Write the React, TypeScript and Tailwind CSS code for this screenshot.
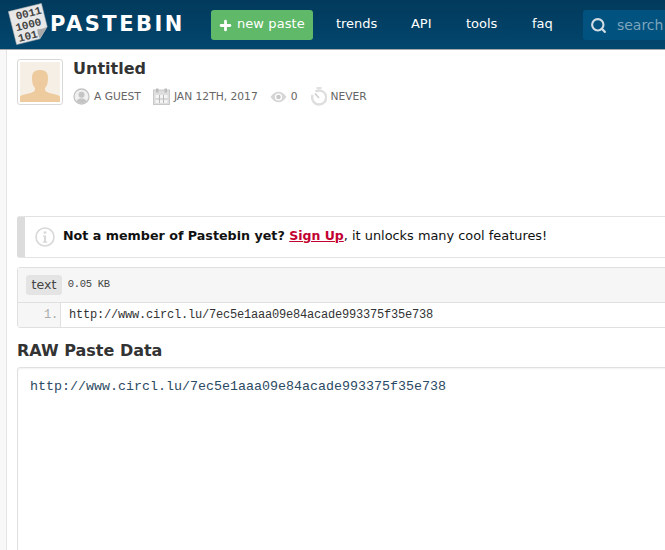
import { Plus, Search } from "lucide-react";

const sans = "font-['DejaVu_Sans',sans-serif]";
const mono = "font-['Liberation_Mono',monospace]";

function Logo() {
  return (
    <svg width="42" height="42" viewBox="0 0 42 42" className="shrink-0">
      <g transform="rotate(-14 21 21)">
        <path d="M4 4h34v24l-10 10H4z" fill="#e8e8e8" stroke="#bbb" strokeWidth="0.5" strokeLinejoin="round" />
        <path d="M38 28L28 38c-1-4-1-7 0-10 3 1 7 1 10 0z" fill="#a9a9a9" />
        <text x="10" y="14" fontFamily="Liberation Mono" fontWeight="700" fontSize="11" fill="#444">0011</text>
        <text x="7" y="25" fontFamily="Liberation Mono" fontWeight="700" fontSize="11" fill="#444">1000</text>
        <text x="7" y="36" fontFamily="Liberation Mono" fontWeight="700" fontSize="11" fill="#444">101</text>
      </g>
    </svg>
  );
}

function Avatar() {
  return (
    <div className="h-[46px] w-[46px] shrink-0 rounded-[3px] border border-[#d8d8d8] bg-white p-[2px]">
      <svg width="40" height="40" viewBox="0 0 40 40" className="block">
        <rect width="40" height="40" fill="#f5efe6" />
        <path d="M0 40v-5c1-3 9-3 13-5 2-1 2-2 2-4-2-2-3-5-3-10 0-6 3-8 8-8s8 2 8 8c0 5-1 8-3 10 0 2 0 3 2 4 4 2 12 2 13 5v5z" fill="#eecb9f" />
      </svg>
    </div>
  );
}

function GuestIcon() {
  return (
    <svg width="17" height="17" viewBox="0 0 17 17">
      <circle cx="8.5" cy="8.5" r="7.5" fill="#f0f0f0" stroke="#c4c4c4" strokeWidth="1.3" />
      <circle cx="8.5" cy="6.8" r="3" fill="#c4c4c4" />
      <path d="M3.5 13.5c1-2.5 3-3 5-3s4 .5 5 3c-3 2-7 2-10 0z" fill="#c4c4c4" />
    </svg>
  );
}

function CalendarIcon() {
  return (
    <svg width="17" height="17" viewBox="0 0 17 17">
      <rect x="0.5" y="2" width="16" height="14.5" fill="#ddd" stroke="#c9c9c9" />
      <rect x="3" y="0.5" width="2.5" height="4" fill="#bbb" />
      <rect x="11.5" y="0.5" width="2.5" height="4" fill="#bbb" />
      <rect x="2.5" y="7" width="12" height="8" fill="#f4f4f4" />
      <path d="M6.5 7v8M10.5 7v8M2.5 11h12" stroke="#bbb" />
    </svg>
  );
}

function EyeIcon() {
  return (
    <svg width="17" height="12" viewBox="0 0 17 12">
      <path d="M.5 6C3 2.3 5.6.8 8.5.8S14 2.3 16.5 6C14 9.7 11.4 11.2 8.5 11.2S3 9.7.5 6z" fill="#d6d6d6" />
      <circle cx="8.5" cy="6" r="3.6" fill="#fff" />
      <circle cx="8.5" cy="6" r="2.3" fill="#c8c8c8" />
    </svg>
  );
}

function TimerIcon() {
  return (
    <svg width="16" height="19" viewBox="0 0 16 19">
      <rect x="5.5" y="0" width="5" height="2" fill="#e0e0e0" />
      <path d="M4.5 4.5A7 7 0 1 1 1.6 8" fill="none" stroke="#dedede" strokeWidth="2.4" />
      <path d="M8 11L4 6.5" stroke="#cfcfcf" strokeWidth="1.6" />
    </svg>
  );
}

function InfoIcon() {
  return (
    <svg width="20" height="20" viewBox="0 0 20 20">
      <circle cx="10" cy="10" r="9" fill="#fff" stroke="#d8d8d8" strokeWidth="1.6" />
      <circle cx="10" cy="5.6" r="1.4" fill="#d8d8d8" />
      <path d="M8 8.5h3v6h1.2v1.3H7.8v-1.3H9V9.8H8z" fill="#d8d8d8" />
    </svg>
  );
}

export default function App() {
  return (
    <div className={`h-[550px] w-[665px] overflow-hidden bg-white ${sans}`}>
      <header className="flex h-[50px] items-start border-b border-[#a8a8a8] bg-gradient-to-b from-[#023a5c] to-[#02466e]">
        <div className="ml-[8px] mt-[3px] shrink-0">
          <Logo />
        </div>
        <span className="mt-[10px] shrink-0 text-[21px] leading-[28px] font-bold tracking-[2.5px] text-white">PASTEBIN</span>
        <button className="ml-[26px] mt-[10px] flex h-[30px] w-[102px] shrink-0 items-center rounded-[3px] bg-[#5fb968] pl-[7px] text-[13px] whitespace-nowrap text-white">
          <Plus size={15} strokeWidth={4.5} className="shrink-0" />
          <span className="ml-[4px] -translate-y-[1px] tracking-[0.1px]">new paste</span>
        </button>
        <nav className="mt-[15px] ml-[23px] flex shrink-0 text-[13px] leading-[18px] text-white">
          <span className="w-[75px]">trends</span>
          <span className="w-[55px]">API</span>
          <span className="w-[66px]">tools</span>
          <span className="w-[51px]">faq</span>
        </nav>
        <div className="mt-[10px] flex h-[30px] w-[100px] shrink-0 items-center rounded-l-[3px] bg-[#01527f] pl-[7px]">
          <Search size={17} strokeWidth={3} className="shrink-0 text-[#d3dde3]" />
          <span className="ml-[10px] text-[14px] text-[#7da5bd]">search</span>
        </div>
      </header>

      <div className="flex h-[500px]">
        <div className="w-[7px] shrink-0 border-r border-[#e4e4e4] bg-[#f8f8f8]" />
        <main className="min-w-0 flex-1 pl-[10px]">
          <div className="flex pt-[9px]">
            <Avatar />
            <div className="ml-[10px]">
              <h1 className="text-[16px] leading-[20px] font-bold text-[#333]">Untitled</h1>
              <div className="mt-[8px] flex items-center text-[10.7px] leading-[18px] text-[#666]">
                <GuestIcon />
                <span className="ml-[4px]">A GUEST</span>
                <span className="ml-[12px] flex"><CalendarIcon /></span>
                <span className="ml-[4px]">JAN 12TH, 2017</span>
                <span className="ml-[12px] flex"><EyeIcon /></span>
                <span className="ml-[4px]">0</span>
                <span className="ml-[13px] flex"><TimerIcon /></span>
                <span className="ml-[4px]">NEVER</span>
              </div>
            </div>
          </div>

          <div className="mt-[110px] flex h-[42px] w-[700px] items-center rounded-[3px] border border-[#e2e2e2] border-l-[8px] border-l-[#dcdcdc] pl-[10px] text-[12.9px] text-[#111]">
            <InfoIcon />
            <p className="mb-[2px] ml-[8px]">
              <b className="text-[12.7px]">Not a member of Pastebin yet? </b>
              <b className="text-[12.5px] text-[#c20031] underline">Sign Up</b>, it unlocks many cool features!
            </p>
          </div>

          <div className="mt-[9px] w-[700px] rounded-[3px] border border-[#e0e0e0]">
            <div className="flex h-[35px] items-center border-b border-[#e0e0e0] bg-[#f6f6f6] pl-[8px]">
              <span className="rounded-[3px] bg-[#e4e4e4] px-[5.5px] text-[12.6px] leading-[20px] text-[#444]">text</span>
              <span className={`ml-[6px] text-[10.5px] tracking-[-0.3px] text-[#444] ${mono}`}>0.05 KB</span>
            </div>
            <div className={`flex h-[24px] text-[12px] leading-[25px] tracking-[-0.2px] ${mono}`}>
              <div className="w-[43px] border-r border-[#e0e0e0] bg-[#f6f6f6] pr-[2px] text-right text-[#aaa]">1.</div>
              <div className="pl-[8px] text-[#333]">http://www.circl.lu/7ec5e1aaa09e84acade993375f35e738</div>
            </div>
          </div>

          <h2 className="mt-[13px] text-[16px] leading-[20px] font-bold text-[#333]">RAW Paste Data</h2>
          <div className={`mt-[6px] h-[300px] w-[700px] rounded-[3px] border border-[#e0e0e0] pl-[12px] pt-[10px] text-[13.33px] leading-[17px] text-[#2b4a63] shadow-[inset_0_1px_2px_rgba(0,0,0,0.06)] ${mono}`}>
            http://www.circl.lu/7ec5e1aaa09e84acade993375f35e738
          </div>
        </main>
      </div>
    </div>
  );
}
